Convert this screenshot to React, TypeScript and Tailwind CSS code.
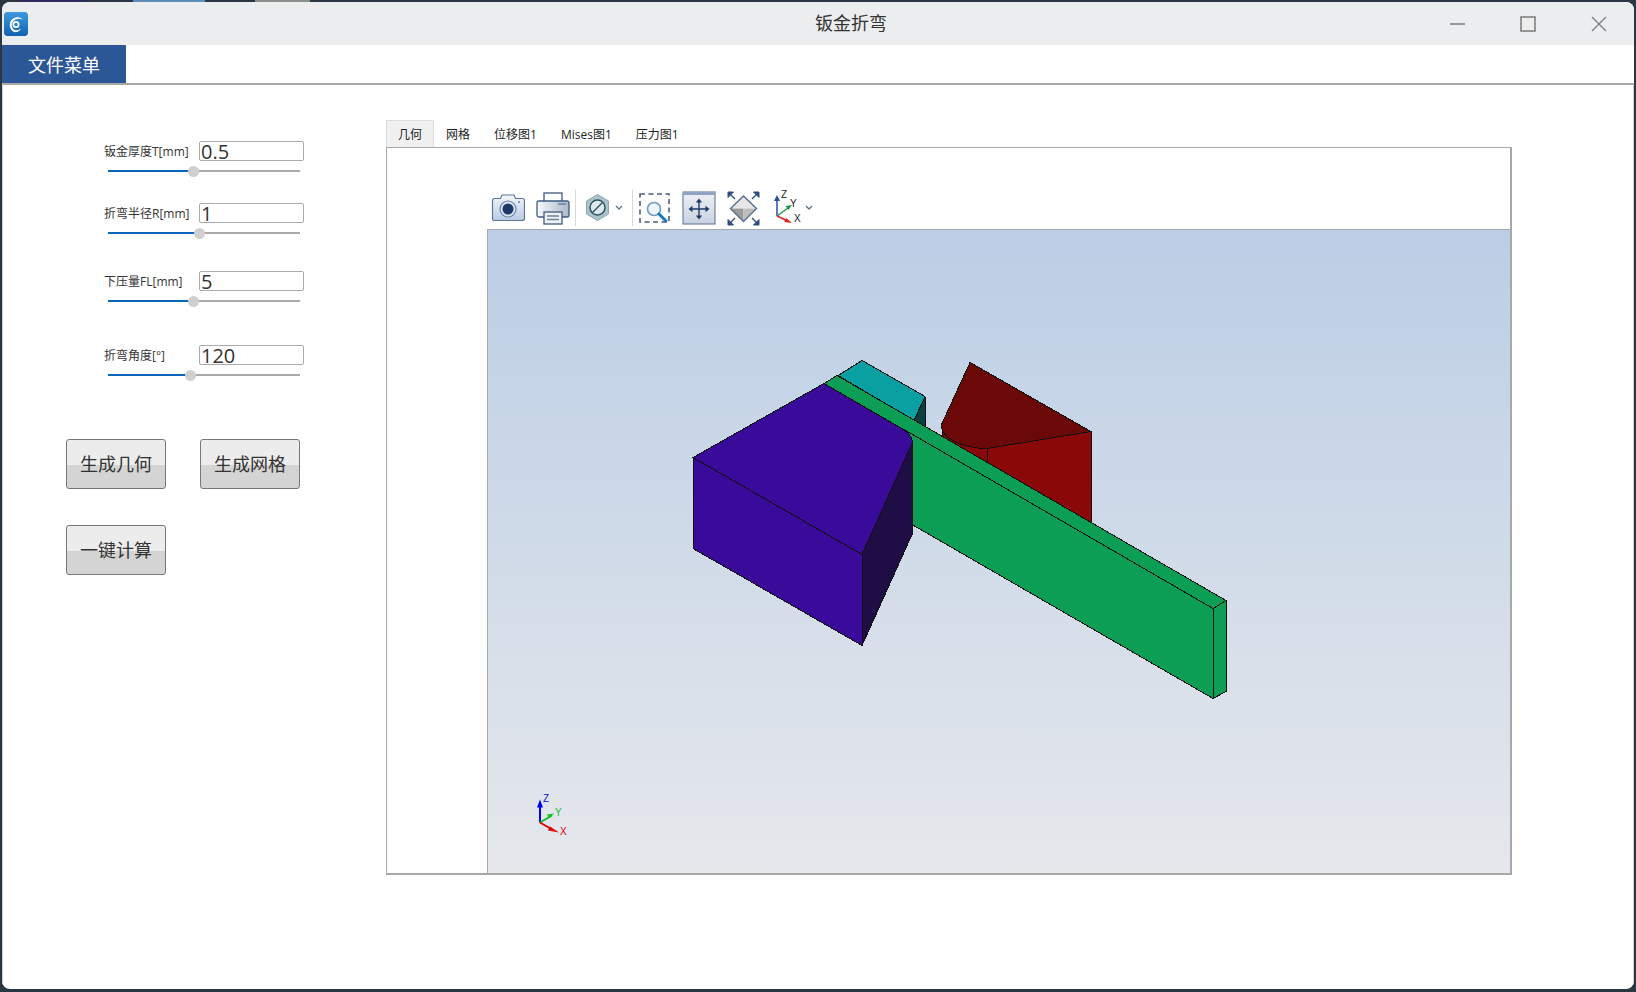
import React from 'react';

const cjk = "font-['Open_Sans','Noto_Sans_CJK_SC',sans-serif]";

const params = [
  { label: '钣金厚度T[mm]', value: '0.5', thumb: 85, top: 'mt-0' },
  { label: '折弯半径R[mm]', value: '1', thumb: 91, top: 'mt-[26px]' },
  { label: '下压量FL[mm]', value: '5', thumb: 85, top: 'mt-[32px]' },
  { label: '折弯角度[°]', value: '120', thumb: 82, top: 'mt-[38px]' },
];

const tabs = ['几何', '网格', '位移图1', 'Mises图1', '压力图1'];

const Logo = () => (
  <svg width="24" height="24" viewBox="0 0 24 24" className="rounded-[3px]">
    <defs>
      <linearGradient id="logoBg" x1="0" y1="0" x2="0" y2="1">
        <stop offset="0" stopColor="#3d9be0" />
        <stop offset="1" stopColor="#0f62b0" />
      </linearGradient>
    </defs>
    <rect width="24" height="24" rx="3" fill="url(#logoBg)" />
    <circle cx="12" cy="12.500" r="2.600" fill="none" stroke="#fff" strokeWidth="1.800" />
    <path
      d="M6 14.500C4.800 9.500 9 4.800 14 5.300c2 .2 3.800 1.200 4.800 2.700-1.500-1-3.600-1.400-5.300-1-3.500.7-5.800 3-5.700 6.500 0 2.800 2.500 5 5.200 4.800 1.500 0 2.900-.8 3.800-2-.2 2-2.300 3.700-4.600 3.800C9.300 20.400 6.800 18 6 14.500z"
      fill="#fff"
    />
  </svg>
);

const Chevron = () => (
  <svg width="8" height="36" viewBox="0 0 8 36">
    <path d="M1 16l3 3 3-3" fill="none" stroke="#5c7488" strokeWidth="1.300" />
  </svg>
);

const Separator = () => <div className="w-px h-[36px] bg-[#d9d9d9]" />;

const Camera = () => (
  <svg width="34" height="36" viewBox="0 0 34 36">
    <defs>
      <linearGradient id="camBody" x1="0" y1="0" x2="0" y2="1">
        <stop offset="0" stopColor="#f3f6fb" />
        <stop offset="1" stopColor="#b9cbe4" />
      </linearGradient>
    </defs>
    <path
      d="M2.500 8.500h7l1.500-3.500h12l1.500 3.500h7a2 2 0 0 1 2 2v18a2 2 0 0 1-2 2h-29a2 2 0 0 1-1-2v-18a2 2 0 0 1 2-2z"
      fill="url(#camBody)"
      stroke="#5c7698"
      strokeWidth="1.200"
    />
    <circle cx="17" cy="19" r="8" fill="#dbe5f3" stroke="#6d86aa" strokeWidth="1.200" />
    <circle cx="17" cy="19" r="5.500" fill="#1c3768" />
    <circle cx="28" cy="12" r="1" fill="#6d86aa" />
  </svg>
);

const Printer = () => (
  <svg width="34" height="36" viewBox="0 0 34 36">
    <defs>
      <linearGradient id="prBody" x1="0" y1="0" x2="1" y2="0">
        <stop offset="0" stopColor="#f7f9fc" />
        <stop offset="1" stopColor="#a9b8c9" />
      </linearGradient>
    </defs>
    <rect x="8" y="3" width="18" height="10" fill="#fff" stroke="#3e5a80" strokeWidth="1.300" />
    <rect x="1" y="11" width="32" height="16" rx="2" fill="url(#prBody)" stroke="#3e5a80" strokeWidth="1.300" />
    <path d="M22 14h8" stroke="#6e8199" strokeWidth="1.500" />
    <rect x="8" y="22" width="18" height="12" fill="#eef2f7" stroke="#3e5a80" strokeWidth="1.300" />
    <path d="M11 26h12M11 29.500h12" stroke="#6e8199" strokeWidth="1.300" />
  </svg>
);

const Hexagon = () => (
  <svg width="25" height="36" viewBox="0 0 25 36">
    <path d="M12.500 4.500l11 6.500v13l-11 6.500-11-6.500v-13z" fill="#a9c3c9" stroke="#8ea7ae" strokeWidth="1" />
    <circle cx="12.500" cy="17.500" r="7.500" fill="#dfe9eb" stroke="#2d5663" strokeWidth="1.500" />
    <path d="M7.500 22.500l10-10" stroke="#2d5663" strokeWidth="1.500" />
  </svg>
);

const ZoomBox = () => (
  <svg width="32" height="36" viewBox="0 0 32 36">
    <rect x="1" y="4" width="29" height="28" fill="none" stroke="#4a5f80" strokeWidth="1.600" strokeDasharray="5 3.500" />
    <circle cx="15" cy="19" r="6.500" fill="#eef5fb" stroke="#6d9cc2" strokeWidth="1.600" />
    <path d="M20 24l7 7" stroke="#1b78b8" strokeWidth="3" strokeLinecap="round" />
  </svg>
);

const Pan = () => (
  <svg width="34" height="36" viewBox="0 0 34 36">
    <defs>
      <linearGradient id="panBg" x1="0" y1="0" x2="0" y2="1">
        <stop offset="0" stopColor="#eef1f6" />
        <stop offset="1" stopColor="#c9d2e0" />
      </linearGradient>
    </defs>
    <rect x="1" y="2" width="32" height="32" fill="url(#panBg)" stroke="#6f82a0" strokeWidth="1.200" />
    <rect x="1" y="2" width="32" height="3" fill="#8fa3c2" />
    <path d="M17 11v16M9 19h16" stroke="#1f3b66" strokeWidth="1.400" />
    <path d="M17 8.500l-3.200 4h6.400zM17 29.500l-3.200-4h6.400zM6.500 19l4-3.200v6.400zM27.500 19l-4-3.200v6.400z" fill="#1f3b66" />
  </svg>
);

const Fit = () => (
  <svg width="33" height="36" viewBox="0 0 33 36">
    <path d="M16.500 6l13 12.500H3.500z" fill="#e6e6e6" />
    <path d="M3.500 18.500h13v13z" fill="#9c9c9c" />
    <path d="M16.500 18.500h13l-13 13z" fill="#bdbdbd" />
    <path d="M16.500 6l13 12.500-13 13-13-13z" fill="none" stroke="#56708f" strokeWidth="1.400" />
    <path d="M1 2h5.500L1 7.500zM32 2h-5.500L32 7.500zM1 35h5.500L1 29.500zM32 35h-5.500L32 29.500z" fill="#2d4f78" stroke="#2d4f78" />
    <path d="M2 3l6 6M31 3l-6 6M2 34l6-6M31 34l-6-6" stroke="#2d4f78" strokeWidth="1.400" />
  </svg>
);

const AxesIcon = () => (
  <svg width="29" height="36" viewBox="0 0 29 36">
    <path d="M4 26V9" stroke="#27509c" strokeWidth="1.500" />
    <path d="M4 5l-3 6h6z" fill="#27509c" />
    <path d="M4 26l11-8" stroke="#1c9a50" strokeWidth="1.500" />
    <path d="M19 15l-6.500 1 3 4z" fill="#1c9a50" />
    <path d="M4 26l11 5" stroke="#e02222" strokeWidth="1.500" />
    <path d="M19 33l-6-5-1.800 4z" fill="#e02222" />
    <text x="8" y="8" fontSize="10" fill="#222" fontFamily="Liberation Sans, sans-serif">Z</text>
    <text x="17" y="17" fontSize="10" fill="#222" fontFamily="Liberation Sans, sans-serif">Y</text>
    <text x="21" y="32" fontSize="10" fill="#222" fontFamily="Liberation Sans, sans-serif">X</text>
  </svg>
);

// model view, drawn in page coordinates so the points read straight off the screenshot
const Scene = () => (
  <svg width="1023" height="645" viewBox="488 229.500 1023 645" className="block">
    <g stroke="#111" strokeWidth="1" strokeLinejoin="round" shapeRendering="crispEdges">
      {/* rear right die */}
      <path d="M942 423V436L960 446 987 463 1091 522V431L987 448C970 448 952 442 942 423Z" fill="#8b0808" />
      <path d="M942 423V431L951 437 942 431Z" fill="#2a0a0a" />
      <path d="M987 448V464" fill="none" />
      <path d="M970 362L1091 431 987 448C962 448 938 436 942 423Z" fill="#6b0808" />
      {/* rear teal die */}
      <path d="M838 375L862 360 925 396 914 420Z" fill="#0a9fa0" />
      <path d="M925 396V428L914 421Z" fill="#0b4040" />
      {/* sheet */}
      <path d="M824 383L837 375 1226 600 1213 608Z" fill="#0c9e54" />
      <path d="M904 429L1213 608V698L912 524Z" fill="#0c9e54" />
      <path d="M1213 608L1226 600V691L1213 698Z" fill="#0c9e54" />
      {/* front purple die */}
      <path d="M912 443V534L862 645V554Z" fill="#1f0e45" />
      <path d="M693 457V548L862 645V554Z" fill="#3a0a9a" />
      <path d="M693 457L824 383 905 430C911 434 913 440 912 443L862 554Z" fill="#3a0a9a" />
    </g>
    {/* corner triad */}
    <path d="M540 822V802" stroke="#0000f0" strokeWidth="2" />
    <path d="M540 799l-3 8h6z" fill="#0000f0" />
    <path d="M540 822l12-7" stroke="#10c020" strokeWidth="2" />
    <path d="M554 813l-7 1 2 4z" fill="#10c020" />
    <path d="M540 822l12 7" stroke="#e00000" strokeWidth="2" />
    <path d="M559 832l-9-6-2 4z" fill="#e00000" />
    <text x="543" y="801" fontSize="10" fill="#1010e0" fontFamily="Liberation Sans, sans-serif">Z</text>
    <text x="555" y="815" fontSize="10" fill="#20c030" fontFamily="Liberation Sans, sans-serif">Y</text>
    <text x="560" y="834" fontSize="10" fill="#e00000" fontFamily="Liberation Sans, sans-serif">X</text>
  </svg>
);

const ActionButton: React.FC<{ text: string }> = ({ text }) => (
  <button className="w-[100px] h-[50px] rounded-[3px] border border-[#777] bg-[linear-gradient(#ececec_52%,#d4d4d4_52%)] text-[18px] text-[#333]">
    {text}
  </button>
);

export default function App() {
  return (
    <div className={`w-[1636px] h-[992px] overflow-hidden bg-[#2a3742] pl-[2px] pr-[2px] pb-[3px] flex flex-col ${cjk}`}>
      <div className="h-[2px] shrink-0 -ml-[2px] flex">
        <div className="w-[20px]" />
        <div className="w-[68px] bg-[#2f2a5c]" />
        <div className="w-[45px]" />
        <div className="w-[72px] bg-[#5c8db8]" />
        <div className="w-[50px]" />
        <div className="w-[55px] bg-[#8c8f8c]" />
      </div>

      <div className="flex-1 flex flex-col rounded-[8px] overflow-hidden bg-white">
        {/* title bar */}
        <div className="h-[43px] shrink-0 bg-[#ecedef] flex items-center pl-[2px]">
          <Logo />
          <div className="flex-1 text-center text-[18px] text-[#333] pl-[224px]">钣金折弯</div>
          <div className="flex items-center">
            <svg width="16" height="16" viewBox="0 0 16 16" className="mr-[54px]">
              <path d="M0 8h15" stroke="#7a7a7a" strokeWidth="1.500" />
            </svg>
            <svg width="16" height="16" viewBox="0 0 16 16" className="mr-[55px]">
              <rect x="1" y="1" width="14" height="14" fill="none" stroke="#7a7a7a" strokeWidth="1.500" />
            </svg>
            <svg width="16" height="16" viewBox="0 0 16 16" className="mr-[27px]">
              <path d="M1 1l14 14M15 1L1 15" stroke="#7a7a7a" strokeWidth="1.200" />
            </svg>
          </div>
        </div>

        {/* menu */}
        <div className="h-[38px] shrink-0 flex">
          <div className="w-[124px] bg-[#2b5797] text-white text-[18px] pt-[2px] flex items-center justify-center">文件菜单</div>
        </div>

        <div className="flex-1 flex border-t-2 border-[#a8a8a8] border-x border-x-[#d0d0d0]">
          {/* parameters */}
          <div className="w-[383px] shrink-0 pt-[56px]">
            {params.map((p) => (
              <div key={p.label} className={p.top}>
                <div className="flex items-center pl-[101px]">
                  <div className="w-[95px] text-[12px] text-[#333] whitespace-nowrap pt-[2px]">{p.label}</div>
                  <div className="w-[105px] h-[20px] border border-[#aaa] rounded-[2px] text-[20px] leading-[19px] text-[#333] pl-[1px]">
                    {p.value}
                  </div>
                </div>
                <div className="relative mt-[4px] ml-[105px] w-[192px] h-[12px] flex items-center">
                  <div className="h-[2px] bg-[#0a66bb]" style={{ width: p.thumb }} />
                  <div className="h-[2px] flex-1 bg-[#aaa]" />
                  <div
                    className="absolute top-[0.5px] -ml-[5.5px] w-[11px] h-[11px] rounded-full bg-[#cfcfcf]"
                    style={{ left: p.thumb }}
                  />
                </div>
              </div>
            ))}
            <div className="mt-[58px] ml-[63px] flex gap-[34px]">
              <ActionButton text="生成几何" />
              <ActionButton text="生成网格" />
            </div>
            <div className="mt-[36px] ml-[63px]">
              <ActionButton text="一键计算" />
            </div>
          </div>

          {/* tabs and view */}
          <div className="w-[1126px] shrink-0 pt-[35px]">
            <div className="h-[27px] flex text-[12px] text-[#222]">
              {tabs.map((t, i) => (
                <div
                  key={t}
                  className={
                    i === 0
                      ? 'px-[11px] bg-[#f0f0f0] border border-b-0 border-[#ddd] leading-[28px]'
                      : 'px-[12px] leading-[29px]'
                  }
                >
                  {t}
                </div>
              ))}
            </div>
            <div className="h-[728px] border-t border-l border-r-2 border-b-2 border-[#a8a8a8] flex flex-col">
              <div className="h-[81px] shrink-0 pt-[42px] pl-[104px] flex items-start">
                <Camera />
                <div className="ml-[11px]"><Printer /></div>
                <div className="ml-[5px]"><Separator /></div>
                <div className="ml-[9px]"><Hexagon /></div>
                <div className="ml-[5px]"><Chevron /></div>
                <div className="ml-[9px]"><Separator /></div>
                <div className="ml-[6px]"><ZoomBox /></div>
                <div className="ml-[11px]"><Pan /></div>
                <div className="ml-[11px]"><Fit /></div>
                <div className="ml-[13px]"><AxesIcon /></div>
                <div className="ml-[3px]"><Chevron /></div>
              </div>
              <div className="flex-1 ml-[100px] border-l border-t border-[#a8a8a8] bg-gradient-to-b from-[#bbcee5] to-[#e6e8ec] overflow-hidden">
                <Scene />
              </div>
            </div>
          </div>
        </div>
      </div>
    </div>
  );
}
